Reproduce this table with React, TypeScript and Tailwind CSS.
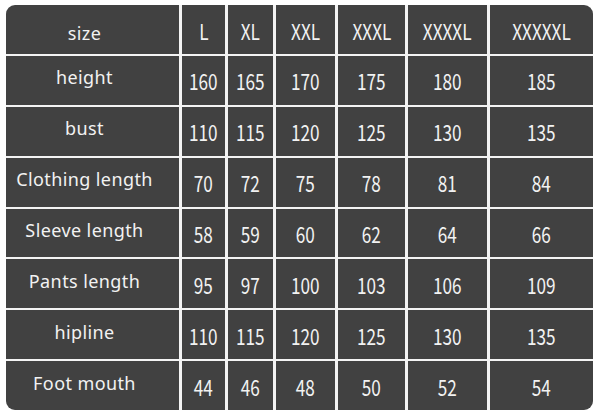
import React from "react";

const header = ["size", "L", "XL", "XXL", "XXXL", "XXXXL", "XXXXXL"];
const rows: [string, ...string[]][] = [
  ["height", "160", "165", "170", "175", "180", "185"],
  ["bust", "110", "115", "120", "125", "130", "135"],
  ["Clothing length", "70", "72", "75", "78", "81", "84"],
  ["Sleeve length", "58", "59", "60", "62", "64", "66"],
  ["Pants length", "95", "97", "100", "103", "106", "109"],
  ["hipline", "110", "115", "120", "125", "130", "135"],
  ["Foot mouth", "44", "46", "48", "50", "52", "54"],
];

const labelFont = { fontFamily: '"Noto Sans", "Open Sans", sans-serif' };
const numFont = { fontFamily: '"Noto Sans CJK SC", "Noto Sans", sans-serif' };

function Label({ text, head }: { text: string; head?: boolean }) {
  return (
    <div
      className={
        head
          ? "bg-[#414141] flex items-center justify-center pr-4 pt-[8px]"
          : "bg-[#414141] flex items-center justify-center pr-4 pb-[5px]"
      }
    >
      <span className="text-[18px] text-[#f2f2f2] tracking-[0.4px]" style={labelFont}>
        {text}
      </span>
    </div>
  );
}

function Num({ text, head }: { text: string; head?: boolean }) {
  return (
    <div
      className={
        head
          ? "bg-[#414141] flex items-center justify-center pt-[3px]"
          : "bg-[#414141] flex items-center justify-center pt-[1px]"
      }
    >
      <span
        className="text-[22px] text-[#f2f2f2] inline-block scale-x-[0.78] whitespace-nowrap"
        style={numFont}
      >
        {text}
      </span>
    </div>
  );
}

export default function App() {
  return (
    <div className="w-[600px] h-[415px] bg-white pt-[5px] pl-[6px]">
      <div className="w-[587px] h-[405px] rounded-[9px] overflow-hidden bg-[#f3f3f3] grid grid-cols-[173px_43px_45px_59px_67px_79px_103px] grid-rows-8 gap-x-[3px] gap-y-[2px]">
        <Label text={header[0]} head />
        {header.slice(1).map((h) => (
          <Num key={h} text={h} head />
        ))}
        {rows.map((r) => (
          <React.Fragment key={r[0]}>
            <Label text={r[0]} />
            {r.slice(1).map((v, i) => (
              <Num key={i} text={v} />
            ))}
          </React.Fragment>
        ))}
      </div>
    </div>
  );
}
